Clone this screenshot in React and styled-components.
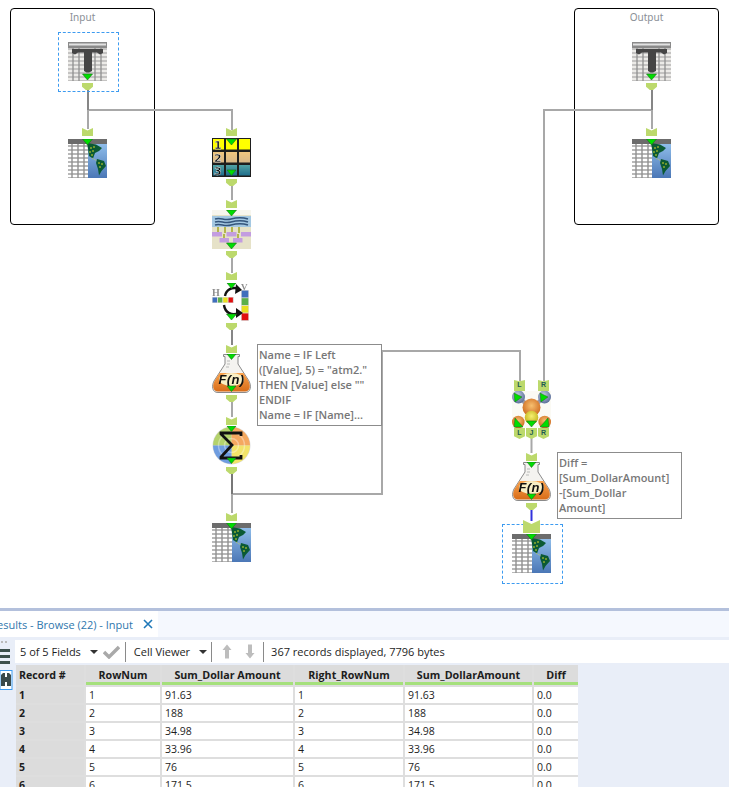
import React from "react";
import styled, { createGlobalStyle } from "styled-components";

const Global = createGlobalStyle`
  html, body { margin: 0; padding: 0; background: #fff; }
  body { font-family: "Open Sans", "Noto Sans", sans-serif; }
`;

const Page = styled.div`
  width: 729px;
  height: 787px;
  overflow: hidden;
  display: flex;
  flex-direction: column;
  background: #fff;
`;

const Canvas = styled.div`
  position: relative;
  flex: 0 0 608px;
  background: #fff;
`;

const Wires = styled.svg`
  position: absolute;
  left: 0;
  top: 0;
`;

const Container = styled.div`
  position: absolute;
  left: ${(p) => p.$x}px;
  top: 8px;
  width: 143px;
  height: 215px;
  border: 1px solid #000;
  border-radius: 4px;
  text-align: center;
  font: 10px/1 "Noto Sans", sans-serif;
  color: #8a8f96;
`;

const ContainerTitle = styled.div`
  margin-top: 3px;
`;

const Selection = styled.div`
  position: absolute;
  left: ${(p) => p.$x}px;
  top: ${(p) => p.$y}px;
  width: 59px;
  height: 58px;
  border: 1px dashed #3d9bf0;
`;

const Node = styled.svg`
  position: absolute;
  left: ${(p) => p.$x}px;
  top: ${(p) => p.$y}px;
  display: block;
  filter: blur(0.4px);
`;

const Anchor = styled.div`
  position: absolute;
  left: ${(p) => p.$x}px;
  top: ${(p) => p.$y}px;
  width: ${(p) => p.$w || 11}px;
  height: ${(p) => p.$h || 7}px;
  background: #bcd96c;
  clip-path: ${(p) =>
    p.$in
      ? "polygon(0 0, 50% 30%, 100% 0, 100% 100%, 0 100%)"
      : "polygon(0 0, 100% 0, 100% 55%, 65% 100%, 35% 100%, 0 55%)"};
`;

const LabelAnchor = styled.div`
  position: absolute;
  left: ${(p) => p.$x}px;
  top: ${(p) => p.$y}px;
  width: 11px;
  height: 11px;
  background: #bcd96c;
  color: #1d5a54;
  font: bold 7px/10px "Liberation Sans", sans-serif;
  text-align: center;
  clip-path: ${(p) =>
    p.$in
      ? "polygon(0 0, 50% 12%, 100% 0, 100% 100%, 0 100%)"
      : "polygon(0 0, 100% 0, 100% 75%, 50% 100%, 0 75%)"};
`;

const Note = styled.div`
  position: absolute;
  left: ${(p) => p.$x}px;
  top: ${(p) => p.$y}px;
  width: 125px;
  height: ${(p) => p.$h}px;
  box-sizing: border-box;
  background: #fff;
  border: 1px solid #8c8c8c;
  padding: 2px 0 0 1px;
  color: #777;
  font: 600 11px/15px "Open Sans", sans-serif;
`;

const NoteLine = styled.div`
  white-space: nowrap;
`;

const TopRule = styled.div`
  flex: 0 0 3px;
  background: #b3c0dc;
`;

const TabBar = styled.div`
  flex: 0 0 26px;
  display: flex;
  background: #f5f8fe;
  overflow: hidden;
`;

const Tab = styled.div`
  width: 158px;
  display: flex;
  align-items: center;
  justify-content: flex-end;
  gap: 10px;
  padding-right: 5px;
  box-sizing: border-box;
  background: #fff;
  color: #2f77ad;
  font-size: 11px;
  white-space: nowrap;
  overflow: hidden;
`;

const TabClose = styled.svg`
  flex: none;
`;

const Body = styled.div`
  flex: 1;
  display: flex;
  min-height: 0;
  background: #e9eef8;
  padding-top: 3px;
`;

const Side = styled.div`
  flex: 0 0 15px;
  display: flex;
  flex-direction: column;
  overflow: hidden;
`;

const Main = styled.div`
  flex: 1;
  display: flex;
  flex-direction: column;
  min-width: 0;
`;

const Toolbar = styled.div`
  flex: 0 0 23px;
  display: flex;
  align-items: center;
  background: #fff;
  color: #1d1d1d;
  font-size: 11px;
  white-space: nowrap;
`;

const Label = styled.span`
  margin-left: ${(p) => p.$ml || 0}px;
`;

const Caret = styled.span`
  width: 0;
  height: 0;
  margin-left: ${(p) => p.$ml}px;
  border: 4px solid transparent;
  border-top: 4px solid #333;
  border-bottom: 0;
`;

const Sep = styled.span`
  width: 1px;
  height: 20px;
  margin-left: ${(p) => p.$ml}px;
  background: #8a8a8a;
`;

const ToolIcon = styled.svg`
  flex: none;
  margin-left: ${(p) => p.$ml}px;
`;

const Grid = styled.div`
  margin: 2px 0 0 1px;
  width: 562px;
  display: grid;
  grid-template-columns: 68px 74px 131px 108px 127px 44px;
  grid-template-rows: 20px;
  grid-auto-rows: 16px;
  gap: 2px;
  background: #dedede;
  font-size: 10.5px;
  color: #1d1d1d;
  overflow: hidden;
`;

const Head = styled.div`
  box-sizing: border-box;
  background: #dcdcdc;
  border-bottom: 3px solid ${(p) => (p.$plain ? "#dcdcdc" : "#a5e07c")};
  font-weight: 700;
  font-size: 10.7px;
  line-height: 21px;
  text-align: ${(p) => (p.$plain ? "left" : "center")};
  padding-left: ${(p) => (p.$plain ? 3 : 0)}px;
`;

const RecordCell = styled.div`
  background: #dcdcdc;
  font-weight: 700;
  line-height: 16px;
  padding-left: 3px;
`;

const Cell = styled.div`
  background: #fff;
  line-height: 17px;
  padding-left: 3px;
`;

const Bars = styled.svg`
  margin-top: 5px;
`;

const Binoc = styled.svg`
  margin-top: 4px;
`;

const Dots = styled.div`
  height: 2px;
  width: 8px;
  margin: 1px 0 0 1px;
  background: repeating-linear-gradient(90deg, #bbb 0 2px, transparent 2px 4px);
`;

const Tri = ({ x = 19.5, y, size = 5 }) => (
  <path
    d={`M${x - size} ${y}H${x + size}L${x} ${y + size + 1}Z`}
    fill="#00dd00"
    stroke="#1d6b1d"
    strokeWidth=".6"
  />
);

const sizes = { width: 39, height: 39, viewBox: "0 0 39 39" };

const range = (n) => Array.from({ length: n }, (_, i) => i);

const TextInputIcon = (props) => (
  <Node {...sizes} {...props}>
    <rect width="39" height="39" fill="#ecebe8" />
    {range(9).map((i) => (
      <path key={i} d={`M0 ${7 + i * 4}H39`} stroke="#9c9c9c" strokeWidth="1.2" />
    ))}
    {[5, 11, 27, 33].map((x) => (
      <path key={x} d={`M${x} 5V39`} stroke="#8f8f8f" strokeWidth="1.3" />
    ))}
    <rect width="39" height="6" fill="#8a8a8a" />
    <rect x="1" y="1.5" width="37" height="2" fill="#e2e2e2" />
    <path d="M4 7H35V11L32 12.5L29 10.5H24V29L21 30.5H18.5L16 29V10.5H10L7 12.5L4 11Z" fill="#454545" />
    <Tri y={32} size={5} />
  </Node>
);

const BrowseIcon = (props) => (
  <Node {...sizes} {...props}>
    <defs>
      <linearGradient id="sea" x1="0" y1="0" x2="0" y2="1">
        <stop offset="0" stopColor="#8fbdea" />
        <stop offset="1" stopColor="#4b77b6" />
      </linearGradient>
    </defs>
    <rect width="39" height="39" fill="#fff" />
    {range(9).map((i) => (
      <path key={i} d={`M0 ${7 + i * 4}H21`} stroke="#a0a0a0" strokeWidth="1.5" />
    ))}
    {[4, 10, 16].map((x) => (
      <path key={x} d={`M${x} 5V39`} stroke="#909090" strokeWidth="1.4" />
    ))}
    <rect x="20" y="5" width="19" height="34" fill="url(#sea)" />
    <rect width="39" height="5" fill="#6c6c6c" />
    <path d="M19 4L28 5.5L34 9L31 12L27 14L25 19.5L21 17L20 10Z" fill="#0b5a34" />
    <path d="M29 20L36 22L38 27L33.5 32L31 36.5L30 30L28 24Z" fill="#0b5a34" />
    {[[23, 9], [26, 8], [22, 13], [25, 12], [24, 16], [31, 24], [34, 25], [32, 28]].map(([cx, cy]) => (
      <circle key={`${cx}-${cy}`} cx={cx} cy={cy} r=".8" fill="#e9e52a" />
    ))}
    <path d="M24 19L29 22" stroke="#d8d84a" strokeWidth=".8" strokeDasharray="1 1" />
    <Tri y={0} size={5} />
  </Node>
);

const TileIcon = (props) => (
  <Node {...sizes} {...props}>
    <defs>
      <linearGradient id="tan" x1="0" y1="0" x2="0" y2="1">
        <stop offset="0" stopColor="#f0c67e" />
        <stop offset="1" stopColor="#d8b888" />
      </linearGradient>
      <linearGradient id="teal" x1="0" y1="0" x2="0" y2="1">
        <stop offset="0" stopColor="#52a2a4" />
        <stop offset="1" stopColor="#1f6e8c" />
      </linearGradient>
    </defs>
    <rect width="39" height="39" fill="#1e1e1e" />
    {[1, 14, 27].map((x) => (
      <g key={x}>
        <rect x={x} y="1" width="11" height="10.5" fill="#ffff00" />
        <rect x={x} y="14" width="11" height="10.5" fill="url(#tan)" />
        <rect x={x} y="27" width="11" height="10.5" fill="url(#teal)" />
      </g>
    ))}
    {["1", "2", "3"].map((t, i) => (
      <text key={t} x="2" y={10.5 + i * 13} fontFamily="DejaVu Sans" fontWeight="700" fontSize="11" fill="#111" stroke="#fff" strokeWidth=".3">
        {t}
      </text>
    ))}
    <Tri y={1} size={5} />
    <Tri y={32} size={4.5} />
  </Node>
);

const TransformIcon = (props) => (
  <Node {...sizes} {...props}>
    <rect width="39" height="39" fill="#e6e2c8" />
    <rect width="39" height="5" fill="#f7f6ee" />
    <rect y="6" width="39" height="11" fill="#a4c8e2" />
    <path d="M3 9C9 7 12 11 19 9S30 7 36 9M3 12C9 10 12 14 19 12S30 10 36 12M3 15C9 13 12 17 19 15S30 13 36 15" stroke="#34557c" strokeWidth="1.5" fill="none" />
    <path d="M6 17V23M13 17V23M20 17V23M27 17V23M12 24V31M26 24V31" stroke="#a3a825" strokeWidth="1.5" />
    <rect y="22" width="10" height="4.5" fill="#c39de0" />
    <rect x="14.5" y="22" width="10" height="4.5" fill="#c39de0" />
    <rect x="29" y="22" width="10" height="4.5" fill="#c39de0" />
    <rect x="7.5" y="28" width="9.5" height="4.5" fill="#c39de0" />
    <rect x="21" y="28" width="9.5" height="4.5" fill="#c39de0" />
    <Tri y={0} size={5} />
    <Tri y={33} size={5} />
  </Node>
);

const TransposeIcon = (props) => (
  <Node {...sizes} {...props}>
    <text x="0" y="13" fontFamily="Liberation Serif" fontSize="10" fontWeight="700" fill="#8e8e8e">H</text>
    <text x="29" y="6.5" fontFamily="Liberation Serif" fontSize="9" fontWeight="700" fill="#8e8e8e">V</text>
    <rect x="0" y="14" width="22" height="6" fill="#ddd" />
    {["#3f6fbd", "#5bb04a", "#e8e020", "#e01010"].map((c, i) => (
      <rect key={c} x={i * 5.3 + 0.6} y="14.5" width="4.4" height="5" fill={c} />
    ))}
    <rect x="29" y="7" width="8" height="31" fill="#ddd" />
    {["#3f6fbd", "#5bb04a", "#e8e020", "#e01010"].map((c, i) => (
      <rect key={c} x="29.7" y={7.6 + i * 7.6} width="6.6" height="6.8" fill={c} />
    ))}
    <path d="M13 13C14 7 20 3 27 6" stroke="#111" strokeWidth="2.4" fill="none" />
    <path d="M24 1L30 7L23 11Z" fill="#111" />
    <path d="M12 22C13 30 20 33 27 30" stroke="#111" strokeWidth="2.4" fill="none" />
    <path d="M24 25L31 30L24 35Z" fill="#111" />
    <Tri y={0} size={4.5} />
    <Tri y={31} size={5} />
  </Node>
);

const FormulaIcon = (props) => (
  <Node {...sizes} {...props}>
    <defs>
      <linearGradient id="liquid" x1="0" y1="0" x2="0" y2="1">
        <stop offset="0" stopColor="#f8a24e" />
        <stop offset="1" stopColor="#d86c18" />
      </linearGradient>
    </defs>
    <path d="M11.5 .5H27.5V2.5H26V10L37 27C39.5 32 39 38.5 33 38.5H6C0 38.5 -.5 32 2 27L13 10V2.5H11.5Z" fill="#f4f3f0" stroke="#8a8a8a" strokeWidth="1" />
    <path d="M15 7H18M15 10H18M14 13H17" stroke="#aaa" strokeWidth=".8" />
    <path d="M7.5 19H31.5L36.5 27C39 32 38 37.5 33 37.5H6C1 37.5 0 32 2.5 27Z" fill="url(#liquid)" />
    <ellipse cx="19.5" cy="25.5" rx="12.5" ry="6.5" fill="#f9efc4" />
    <text x="19.5" y="30" textAnchor="middle" fontFamily="Liberation Sans" fontWeight="700" fontStyle="italic" fontSize="13" letterSpacing=".4" fill="#111">F(n)</text>
    <Tri y={0} size={4.5} />
    <Tri y={32} size={4.5} />
  </Node>
);

const SummarizeIcon = (props) => (
  <Node {...sizes} {...props}>
    <circle cx="19.5" cy="19.5" r="19" fill="#ddd" />
    <path d="M19.5 19.5V1A18.5 18.5 0 0 0 1 19.5Z" fill="#b4d26c" />
    <path d="M19.5 19.5V1A18.5 18.5 0 0 1 38 19.5Z" fill="#f4a860" />
    <path d="M19.5 19.5H38A18.5 18.5 0 0 1 19.5 38Z" fill="#f2e46a" />
    <path d="M19.5 19.5H1A18.5 18.5 0 0 0 19.5 38Z" fill="#6f9de0" />
    <circle cx="19.5" cy="19.5" r="13" fill="none" stroke="#fff" strokeOpacity=".35" strokeWidth="1.5" />
    <circle cx="19.5" cy="19.5" r="7" fill="none" stroke="#fff" strokeOpacity=".35" strokeWidth="1.5" />
    <path d="M29 10V7H9V8L20 19L9 31V32H29V29" fill="none" stroke="#111" strokeWidth="2.8" />
    <Tri y={0} size={4.5} />
    <Tri y={32} size={4.5} />
  </Node>
);

const JoinIcon = (props) => (
  <Node width="39" height="37" viewBox="0 0 39 37" {...props}>
    <defs>
      <radialGradient id="bluBall" cx=".4" cy=".35" r=".7">
        <stop offset="0" stopColor="#c8d0e4" />
        <stop offset="1" stopColor="#566a96" />
      </radialGradient>
      <radialGradient id="orangeBall" cx=".5" cy=".4" r=".7">
        <stop offset="0" stopColor="#f7c070" />
        <stop offset="1" stopColor="#c65a10" />
      </radialGradient>
      <radialGradient id="yelBall" cx=".5" cy=".4" r=".7">
        <stop offset="0" stopColor="#f6f070" />
        <stop offset="1" stopColor="#b9a80c" />
      </radialGradient>
    </defs>
    <rect width="39" height="37" fill="#fbfaf4" />
    <path d="M9 8L19 18M30 8L19 18" stroke="#9a9aa8" strokeWidth="4" />
    <circle cx="6.5" cy="6" r="6.5" fill="url(#bluBall)" />
    <circle cx="32.5" cy="6" r="6.5" fill="url(#bluBall)" />
    <circle cx="19.5" cy="16.5" r="9" fill="url(#orangeBall)" />
    <circle cx="6.3" cy="31" r="6.3" fill="url(#orangeBall)" />
    <circle cx="32.7" cy="31" r="6.3" fill="url(#orangeBall)" />
    <circle cx="19.5" cy="26.5" r="6.8" fill="url(#yelBall)" />
    <path d="M2 2L10 6L3 11Z" fill="#00dd00" stroke="#1d6b1d" strokeWidth=".5" />
    <path d="M28 2L36 6L29 11Z" fill="#00dd00" stroke="#1d6b1d" strokeWidth=".5" />
    <path d="M3 27L11 36L2 36Z" fill="#00dd00" stroke="#1d6b1d" strokeWidth=".5" />
    <path d="M36 27L37 36L28 36Z" fill="#00dd00" stroke="#1d6b1d" strokeWidth=".5" />
    <Tri y={30} size={5} />
  </Node>
);

const WIRE = "#a8a8a8";

const wires = [
  "M232 130V110H88",
  "M232 186V200",
  "M232 257V273",
  "M232 330V345",
  "M232 402V417",
  "M232 473V513",
  "M232 494H382V351H520V381",
  "M652 110H544V381",
  "M531.5 438V453",
];

const rows = [
  ["1", "91.63"],
  ["2", "188"],
  ["3", "34.98"],
  ["4", "33.96"],
  ["5", "76"],
  ["6", "171.5"],
];

const columns = ["RowNum", "Sum_Dollar Amount", "Right_RowNum", "Sum_DollarAmount", "Diff"];

const inA = (x, y) => <Anchor $in $x={x} $y={y} $h={8} />;
const outA = (x, y) => <Anchor $x={x} $y={y} />;

export default function App() {
  return (
    <Page>
      <Global />
      <Canvas>
        <Container $x={10}>
          <ContainerTitle>Input</ContainerTitle>
        </Container>
        <Container $x={574}>
          <ContainerTitle>Output</ContainerTitle>
        </Container>
        <Wires width="729" height="608" fill="none">
          {wires.map((d) => (
            <path key={d} d={d} stroke={WIRE} strokeWidth="2" />
          ))}
          <path d="M88 90V110" stroke="#868686" strokeWidth="2" />
          <path d="M88 110V129" stroke={WIRE} strokeWidth="2" />
          <path d="M652 90V110" stroke="#868686" strokeWidth="2" />
          <path d="M652 110V129" stroke={WIRE} strokeWidth="2" />
          <path d="M232 330V345" stroke="#868686" strokeWidth="2" />
          <path d="M232 473V494" stroke="#777" strokeWidth="2" />
          <path d="M531.5 509V521" stroke="#3232dc" strokeWidth="2" />
        </Wires>

        <Selection $x={58} $y={32} />
        <TextInputIcon $x={68} $y={42} />
        {outA(82, 83)}
        {inA(82, 128)}
        <BrowseIcon $x={68} $y={139} />

        <TextInputIcon $x={632} $y={42} />
        {outA(646, 83)}
        {inA(646, 128)}
        <BrowseIcon $x={632} $y={139} />

        {inA(226, 128)}
        <TileIcon $x={212} $y={138} />
        {outA(226, 179)}
        {inA(226, 200)}
        <TransformIcon $x={212} $y={210} />
        {outA(226, 251)}
        {inA(226, 272)}
        <TransposeIcon $x={212} $y={283} />
        {outA(226, 323)}
        {inA(226, 345)}
        <FormulaIcon $x={212} $y={354} />
        {outA(226, 395)}
        {inA(226, 417)}
        <SummarizeIcon $x={212} $y={426} />
        {outA(226, 467)}
        {inA(226, 513)}
        <BrowseIcon $x={212} $y={523} />

        <Note $x={257} $y={344} $h={82}>
          <NoteLine>Name = IF Left</NoteLine>
          <NoteLine>([Value], 5) = "atm2."</NoteLine>
          <NoteLine>THEN [Value] else ""</NoteLine>
          <NoteLine>ENDIF</NoteLine>
          <NoteLine>Name = IF [Name]...</NoteLine>
        </Note>

        <LabelAnchor $in $x={514} $y={380}>L</LabelAnchor>
        <LabelAnchor $in $x={538} $y={380}>R</LabelAnchor>
        <JoinIcon $x={512} $y={391} />
        <LabelAnchor $x={514} $y={428}>L</LabelAnchor>
        <LabelAnchor $x={526} $y={428}>J</LabelAnchor>
        <LabelAnchor $x={538} $y={428}>R</LabelAnchor>
        {inA(526, 453)}
        <FormulaIcon $x={512} $y={462} />
        {outA(526, 503)}

        <Note $x={557} $y={452} $h={67}>
          <NoteLine>Diff =</NoteLine>
          <NoteLine>[Sum_DollarAmount]</NoteLine>
          <NoteLine>-[Sum_Dollar</NoteLine>
          <NoteLine>Amount]</NoteLine>
        </Note>

        <Selection $x={502} $y={524} />
        <Anchor $in $x={523} $y={520} $w={17} $h={13} />
        <BrowseIcon $x={512} $y={534} />
      </Canvas>

      <TopRule />
      <TabBar>
        <Tab>
          <span>Results - Browse (22) - Input</span>
          <TabClose width="10" height="10" viewBox="0 0 10 10">
            <path d="M1 1L9 9M9 1L1 9" stroke="#1f78b8" strokeWidth="1.6" />
          </TabClose>
        </Tab>
      </TabBar>
      <Body>
        <Side>
          <Dots />
          <Bars width="15" height="18" viewBox="0 0 15 18">
            <path d="M0 2.5H10M0 8.5H10M0 14.5H10" stroke="#3c4f4c" strokeWidth="3.2" />
          </Bars>
          <Binoc width="13" height="20" viewBox="0 0 13 20">
            <rect x="0" y="0.5" width="12" height="19" fill="#fff" stroke="#3d9bf0" />
            <path d="M1 5L3 3H5V7H7V3H9L11 5L11 16H7V12H5V16H1Z" fill="#3b4a4a" />
          </Binoc>
        </Side>
        <Main>
          <Toolbar>
            <Label $ml={5}>5 of 5 Fields</Label>
            <Caret $ml={9} />
            <ToolIcon $ml={5} width="17" height="14" viewBox="0 0 17 14">
              <path d="M1 7L6 12L16 2" fill="none" stroke="#a9a9a9" strokeWidth="3.4" />
            </ToolIcon>
            <Sep $ml={5} />
            <Label $ml={8}>Cell Viewer</Label>
            <Caret $ml={9} />
            <Sep $ml={4} />
            <ToolIcon $ml={10} width="10" height="15" viewBox="0 0 10 15">
              <path d="M5 .5L9.5 6H7V14.5H3V6H.5Z" fill="#bdbdbd" />
            </ToolIcon>
            <ToolIcon $ml={13} width="10" height="15" viewBox="0 0 10 15">
              <path d="M5 14.5L9.5 9H7V.5H3V9H.5Z" fill="#bdbdbd" />
            </ToolIcon>
            <Sep $ml={8} />
            <Label $ml={7}>367 records displayed, 7796 bytes</Label>
          </Toolbar>
          <Grid>
            <Head $plain>Record #</Head>
            {columns.map((c) => (
              <Head key={c}>{c}</Head>
            ))}
            {rows.map(([n, v]) => (
              <React.Fragment key={n}>
                <RecordCell>{n}</RecordCell>
                <Cell>{n}</Cell>
                <Cell>{v}</Cell>
                <Cell>{n}</Cell>
                <Cell>{v}</Cell>
                <Cell>0.0</Cell>
              </React.Fragment>
            ))}
          </Grid>
        </Main>
      </Body>
    </Page>
  );
}
